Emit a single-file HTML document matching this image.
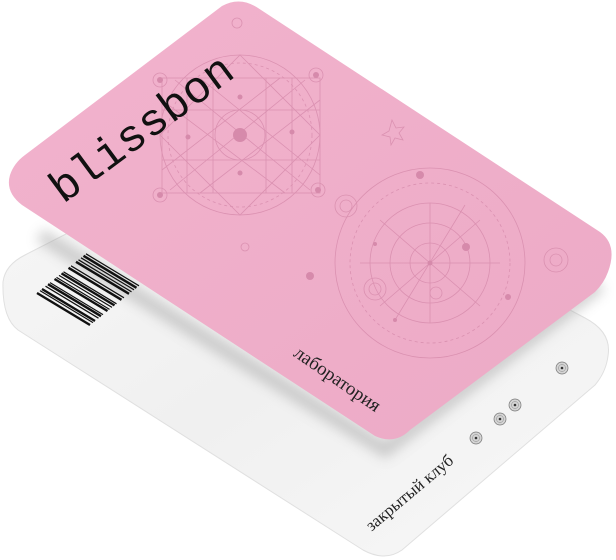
<!DOCTYPE html>
<html><head><meta charset="utf-8"><style>
html,body{margin:0;padding:0;background:#fff;width:616px;height:560px;overflow:hidden}
svg{display:block}
</style></head><body>
<svg width="616" height="560" viewBox="0 0 616 560" xmlns="http://www.w3.org/2000/svg">
<defs>
<linearGradient id="wg" x1="0" y1="0" x2="1" y2="1">
<stop offset="0" stop-color="#f7f7f7"/><stop offset="0.5" stop-color="#f0f0f0"/><stop offset="1" stop-color="#f8f8f8"/>
</linearGradient>
<linearGradient id="pg" x1="0" y1="0" x2="1" y2="1">
<stop offset="0" stop-color="#f2b3cd"/><stop offset="1" stop-color="#ecaac6"/>
</linearGradient>
<filter id="sh" x="-20%" y="-20%" width="140%" height="140%"><feGaussianBlur stdDeviation="6"/></filter>
</defs>
<path d="M3,282 Q5,265 25,255 L250,140 L585,318 Q612,332 608,356 Q606,372 595,385 L402,550 Q385,562 363,550 L18,330 Q2,318 3,282 Z" fill="url(#wg)" stroke="#e0e0e0" stroke-width="1"/>
<path d="M40,235 L385,450 L600,285" fill="none" stroke="#999" stroke-width="14" opacity="0.45" filter="url(#sh)"/>
<g stroke="#111" fill="none">
<path stroke-width="2.4" d="M37,293 l53,32 M42,289 l53,32 M48,284.2 l53,32 M54.5,279 l53,32 M61.5,273.4 l53,32 M68.5,267.8 l53,32 M76,261.8 l53,32 M83.5,255.8 l53,32"/>
<path stroke-width="1.2" d="M40,290.6 l53,32 M45.5,286.2 l53,32 M50,282.6 l53,32 M56.5,277.4 l53,32 M63.5,271.8 l53,32 M71,265.8 l53,32 M78.5,259.8 l53,32 M86,253.8 l53,32 M59,275.4 l53,32 M81,257.8 l53,32"/>
</g>
<g fill="#d4d4d4" stroke="#777" stroke-width="0.7">
<circle cx="562" cy="368" r="6"/><circle cx="515" cy="405" r="6"/><circle cx="500" cy="419" r="6"/><circle cx="476" cy="438" r="6"/>
</g>
<g fill="none" stroke="#888" stroke-width="0.5">
<circle cx="562" cy="368" r="3.5"/><circle cx="515" cy="405" r="3.5"/><circle cx="500" cy="419" r="3.5"/><circle cx="476" cy="438" r="3.5"/>
</g>
<g fill="#333"><circle cx="562" cy="368" r="1.3"/><circle cx="515" cy="405" r="1.3"/><circle cx="500" cy="419" r="1.3"/><circle cx="476" cy="438" r="1.3"/></g>
<text transform="translate(413,497) rotate(-40)" text-anchor="middle" font-family="Liberation Serif, serif" font-size="17" fill="#222">закрытый клуб</text>
<path d="M25,155 L222,6 Q240,-4 258,8 L600,232 Q618,245 608,272 Q604,283 595,292 L410,430 Q395,445 375,436 L22,205 Q5,192 10,175 Q14,163 25,155 Z" fill="url(#pg)"/>
<g fill="none" stroke="#d68aab" stroke-width="0.8" opacity="0.8">
<circle cx="240" cy="135" r="80"/>
<circle cx="240" cy="135" r="72" stroke-dasharray="3 3"/>
<rect x="162" y="78" width="158" height="115"/>
<path d="M240,55 L320,135 L240,215 L160,135 Z"/>
<path d="M175,80 L310,190 M200,78 L320,175 M162,100 L285,193 M305,80 L170,190 M280,78 L162,170 M320,100 L200,193 M187,78 V193 M213,78 V193 M266,78 V193 M292,78 V193 M162,110 H320 M162,160 H320"/>
<circle cx="240" cy="135" r="25"/>
<circle cx="160" cy="80" r="7"/><circle cx="316" cy="75" r="7"/><circle cx="318" cy="190" r="7"/><circle cx="160" cy="195" r="7"/>
<circle cx="430" cy="263" r="95"/>
<circle cx="430" cy="263" r="80" stroke-dasharray="3 3"/>
<circle cx="430" cy="263" r="60"/>
<circle cx="430" cy="263" r="40"/>
<circle cx="430" cy="263" r="20"/>
<path d="M360,263 H500 M430,203 V323 M380,220 L480,306 M480,220 L380,306 M465,205 L395,320"/>
<circle cx="346" cy="206" r="11"/><circle cx="346" cy="206" r="6"/>
<circle cx="556" cy="260" r="12"/><circle cx="556" cy="260" r="6"/>
<circle cx="375" cy="289" r="11"/><circle cx="375" cy="289" r="6"/>
<circle cx="436" cy="293" r="6"/>
<path d="M392,120 l4,8 l8,-1 l-5,6 l4,7 l-8,-2 l-4,7 l-1,-8 l-8,-2 l7,-4 z"/>
<circle cx="237" cy="23" r="5"/><circle cx="245" cy="247" r="4"/>
</g>
<g fill="#d68aab">
<circle cx="240" cy="135" r="7"/><circle cx="160" cy="80" r="3"/><circle cx="316" cy="75" r="3"/><circle cx="318" cy="190" r="3"/>
<circle cx="160" cy="195" r="3"/><circle cx="240" cy="97" r="2.5"/><circle cx="240" cy="173" r="2.5"/><circle cx="188" cy="137" r="2.5"/><circle cx="292" cy="132" r="2.5"/>
<circle cx="420" cy="175" r="4"/><circle cx="310" cy="276" r="4"/><circle cx="466" cy="247" r="4"/>
<circle cx="508" cy="297" r="3"/><circle cx="430" cy="263" r="2.5"/><circle cx="375" cy="244" r="2"/><circle cx="395" cy="320" r="2"/>
</g>
<text transform="translate(150,140) rotate(-36.5)" text-anchor="middle" font-family="Liberation Mono, monospace" font-size="45" fill="#111">blissbon</text>
<text transform="translate(334,384) rotate(34.5)" text-anchor="middle" font-family="Liberation Serif, serif" font-size="19" fill="#222">лаборатория</text>
</svg>
</body></html>
